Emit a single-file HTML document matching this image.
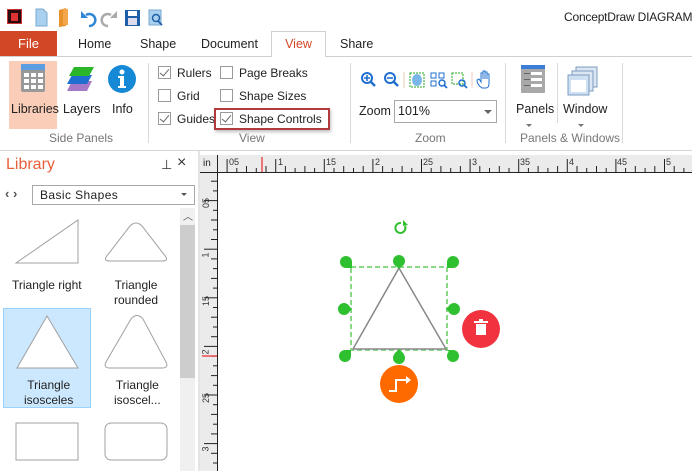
<!DOCTYPE html>
<html><head><meta charset="utf-8"><style>
*{box-sizing:border-box;margin:0;padding:0}
body{width:692px;height:471px;overflow:hidden;background:#fff;font-family:"Liberation Sans",sans-serif;font-size:12px;color:#222;position:relative}
.a{position:absolute}
.t{position:absolute;white-space:nowrap}
.cb{position:absolute;width:13px;height:13px;border:1px solid #9a9a9a;background:#fff}
.cb.c::after{content:"";position:absolute;left:3px;top:0px;width:4px;height:8px;border:solid #666;border-width:0 1.5px 1.5px 0;transform:rotate(40deg)}
.sep{position:absolute;width:1px;background:#dadada}
.gl{position:absolute;color:#777;font-size:12px;white-space:nowrap}
</style></head><body>
<!-- title bar -->
<div class="a" style="left:7px;top:9px;width:15px;height:15px;background:#2a0a0a;border:1px solid #c33"></div>
<div class="a" style="left:11px;top:13px;width:7px;height:8px;background:#d33"></div>
<svg class="a" style="left:30px;top:6px" width="150" height="22">
<path d="M6 3h7l4 4v13H6z" fill="#a9d0ee" stroke="#7aa9cf"/>
<path d="M29 4l7-2v18l-7 1z" fill="#e8902a"/><path d="M33 3h5v16h-5z" fill="#f4a64a"/>
<path d="M56 9a6 6 0 1 1 3 11" fill="none" stroke="#2f86d6" stroke-width="2.5"/><path d="M51 5v7h7z" fill="#2f86d6"/>
<path d="M78 20a6 6 0 1 1 3-11" fill="none" stroke="#aaa" stroke-width="2.5"/><path d="M87 5v7h-7z" fill="#aaa"/>
<rect x="95" y="4" width="15" height="16" fill="#1f5fa8"/><rect x="98" y="5" width="9" height="5" fill="#fff"/><rect x="98" y="12" width="9" height="7" fill="#dde"/>
<rect x="119" y="4" width="12" height="15" fill="#a9d0ee" stroke="#7aa9cf"/><circle cx="126" cy="12" r="3.5" fill="none" stroke="#1f5fa8" stroke-width="1.5"/><path d="M128 15l4 4" stroke="#1f5fa8" stroke-width="1.8"/>
</svg>
<div class="t" style="left:564px;top:10px;font-size:12px;letter-spacing:-0.2px;color:#222">ConceptDraw DIAGRAM</div>
<!-- tabs -->
<div class="a" style="left:0;top:31px;width:57px;height:25px;background:#d24726;color:#fff;font-size:13px;text-align:center;line-height:25px">File</div>
<div class="t" style="left:78px;top:37px;font-size:12.5px">Home</div>
<div class="t" style="left:140px;top:37px;font-size:12.5px">Shape</div>
<div class="t" style="left:201px;top:37px;font-size:12.5px">Document</div>
<div class="a" style="left:271px;top:31px;width:55px;height:26px;border:1px solid #d0d0d0;border-bottom:none;background:#fff;color:#d24726;font-size:12.5px;text-align:center;line-height:25px">View</div>
<div class="t" style="left:340px;top:37px;font-size:12.5px">Share</div>
<div class="a" style="left:0;top:56px;width:692px;height:1px;background:#d0d0d0"></div>
<div class="a" style="left:272px;top:56px;width:53px;height:1px;background:#fff"></div>
<!-- ribbon -->
<div class="a" style="left:9px;top:61px;width:48px;height:68px;background:#f9cdb7"></div>
<svg class="a" style="left:20px;top:63px" width="26" height="32"><rect x="1" y="1" width="24" height="28" rx="2" fill="#999"/><rect x="1" y="1" width="24" height="6" fill="#5a9de0"/>
<g fill="#fff"><rect x="4" y="10" width="5" height="4"/><rect x="11" y="10" width="5" height="4"/><rect x="18" y="10" width="5" height="4"/><rect x="4" y="16" width="5" height="4"/><rect x="11" y="16" width="5" height="4"/><rect x="18" y="16" width="5" height="4"/><rect x="4" y="22" width="5" height="4"/><rect x="11" y="22" width="5" height="4"/><rect x="18" y="22" width="5" height="4"/></g></svg>
<svg class="a" style="left:63px;top:64px" width="32" height="30"><path d="M5 18l20 0-5 10h-20z" fill="#a678c8" transform="translate(4,-1)"/><path d="M9 11h20l-5 9h-20z" fill="#1f6fd0"/><path d="M11 3h20l-5 9h-20z" fill="#2ab52a"/></svg>
<svg class="a" style="left:107px;top:64px" width="30" height="30"><circle cx="15" cy="15" r="14" fill="#1589d6"/><circle cx="15" cy="8" r="2.5" fill="#fff"/><path d="M11 12h6v10h2v2h-8v-2h2v-8h-2z" fill="#fff"/></svg>
<div class="t" style="left:11px;top:102px;font-size:12.5px">Libraries</div>
<div class="t" style="left:63px;top:102px;font-size:12.5px">Layers</div>
<div class="t" style="left:112px;top:102px;font-size:12.5px">Info</div>
<div class="gl" style="left:49px;top:131px">Side Panels</div>
<div class="sep" style="left:148px;top:63px;height:80px"></div>
<div class="cb c" style="left:158px;top:66px"></div><div class="t" style="left:177px;top:66px">Rulers</div>
<div class="cb" style="left:158px;top:89px"></div><div class="t" style="left:177px;top:89px">Grid</div>
<div class="cb c" style="left:158px;top:112px"></div><div class="t" style="left:177px;top:112px">Guides</div>
<div class="cb" style="left:220px;top:66px"></div><div class="t" style="left:239px;top:66px">Page Breaks</div>
<div class="cb" style="left:220px;top:89px"></div><div class="t" style="left:239px;top:89px">Shape Sizes</div>
<div class="a" style="left:214px;top:108px;width:116px;height:22px;border:2px solid #b03a3e;box-shadow:1px 2px 3px rgba(0,0,0,.25)"></div>
<div class="cb c" style="left:220px;top:112px"></div><div class="t" style="left:239px;top:112px">Shape Controls</div>
<div class="gl" style="left:239px;top:131px">View</div>
<div class="sep" style="left:350px;top:63px;height:80px"></div>
<svg class="a" style="left:358px;top:70px" width="142" height="22">
<circle cx="9" cy="8" r="5" fill="none" stroke="#1f6fd0" stroke-width="2"/><path d="M6 8h6M9 5v6" stroke="#1f6fd0" stroke-width="1.6"/><path d="M13 12l4 4" stroke="#1f6fd0" stroke-width="2.5"/>
<circle cx="32" cy="8" r="5" fill="none" stroke="#1f6fd0" stroke-width="2"/><path d="M29 8h6" stroke="#1f6fd0" stroke-width="1.6"/><path d="M36 12l4 4" stroke="#1f6fd0" stroke-width="2.5"/>
<path d="M46 2v16" stroke="#f3c9b8"/>
<rect x="52" y="3" width="14" height="14" fill="none" stroke="#2a2" stroke-dasharray="2 1"/><ellipse cx="59" cy="10" rx="5" ry="6" fill="#7ab6e8"/>
<rect x="73" y="3" width="5" height="5" fill="none" stroke="#1f6fd0"/><rect x="81" y="3" width="5" height="5" fill="none" stroke="#1f6fd0"/><rect x="73" y="11" width="5" height="5" fill="none" stroke="#1f6fd0"/><circle cx="84" cy="13" r="3" fill="none" stroke="#1f6fd0" stroke-width="1.5"/><path d="M86 15l3 3" stroke="#1f6fd0" stroke-width="1.8"/>
<rect x="94" y="3" width="11" height="11" fill="none" stroke="#2a2" stroke-dasharray="2 1"/><circle cx="104" cy="13" r="3" fill="none" stroke="#1f6fd0" stroke-width="1.5"/><path d="M106 15l3 3" stroke="#1f6fd0" stroke-width="1.8"/>
<path d="M114 2v16" stroke="#f3c9b8"/>
<path d="M124 18c-3-2-5-5-5-8l2-1 2 3v-9h2v6-8h2v8-7h2v7-5h2v9c0 3-1 5-3 5z" fill="none" stroke="#1f6fd0" stroke-width="1"/>
</svg>
<div class="t" style="left:359px;top:104px;font-size:12.5px">Zoom</div>
<div class="a" style="left:394px;top:100px;width:103px;height:23px;border:1px solid #a8a8a8"></div>
<div class="t" style="left:398px;top:104px;font-size:12.5px">101%</div>
<div class="a" style="left:484px;top:110px;border:4px solid transparent;border-top-color:#666"></div>
<div class="gl" style="left:415px;top:131px">Zoom</div>
<div class="sep" style="left:505px;top:63px;height:80px"></div>
<svg class="a" style="left:520px;top:64px" width="26" height="30"><rect x="1" y="1" width="24" height="28" rx="1" fill="#a8a8a8"/><rect x="1" y="1" width="24" height="4" fill="#3a7ed8"/><g fill="#fff"><rect x="11" y="8" width="11" height="3"/><rect x="11" y="14" width="11" height="3"/><rect x="11" y="20" width="11" height="3"/></g><g fill="#666"><rect x="4" y="9" width="6" height="1"/><rect x="4" y="15" width="6" height="1"/><rect x="4" y="21" width="6" height="1"/></g></svg>
<div class="t" style="left:516px;top:102px;font-size:12.5px">Panels</div>
<div class="a" style="left:526px;top:124px;border:3px solid transparent;border-top-color:#777"></div>
<div class="sep" style="left:557px;top:63px;height:60px"></div>
<svg class="a" style="left:567px;top:66px" width="32" height="30"><rect x="9" y="1" width="21" height="20" fill="#dbe6f2" stroke="#7a9cc0"/><rect x="5" y="5" width="21" height="20" fill="#dbe6f2" stroke="#7a9cc0"/><rect x="1" y="9" width="21" height="20" fill="#cfe0f2" stroke="#7a9cc0"/><rect x="4" y="14" width="15" height="12" fill="#fff"/></svg>
<div class="t" style="left:563px;top:102px;font-size:12.5px">Window</div>
<div class="a" style="left:578px;top:124px;border:3px solid transparent;border-top-color:#777"></div>
<div class="gl" style="left:520px;top:131px">Panels &amp; Windows</div>
<div class="sep" style="left:622px;top:63px;height:80px"></div>
<div class="a" style="left:0;top:150px;width:692px;height:1px;background:#d6d6d6"></div>
<!-- library -->
<div class="t" style="left:6px;top:156px;font-size:16px;color:#e8603a">Library</div>
<div class="t" style="left:161px;top:157px;font-size:13px;color:#333">⊥</div>
<div class="t" style="left:177px;top:154px;font-size:16px;color:#333">×</div>
<div class="t" style="left:5px;top:186px;font-size:13px;color:#555;font-weight:bold">‹ ›</div>
<div class="a" style="left:32px;top:185px;width:163px;height:20px;border:1px solid #a8a8a8"></div>
<div class="t" style="left:40px;top:188px;font-size:12px;letter-spacing:.4px">Basic Shapes</div>
<div class="a" style="left:181px;top:193px;border:3.5px solid transparent;border-top-color:#555"></div>
<div class="a" style="left:180px;top:208px;width:15px;height:263px;background:#f0f0f0"></div>
<div class="a" style="left:180px;top:225px;width:15px;height:153px;background:#cdcdcd"></div>
<div class="t" style="left:183px;top:208px;font-size:10px;color:#555">︿</div>
<div class="a" style="left:198px;top:151px;width:2px;height:320px;background:#e4e4e4"></div>
<div class="a" style="left:3px;top:308px;width:88px;height:100px;background:#cce8ff;border:1px solid #99d1ff"></div>
<svg class="a" style="left:0;top:0" width="180" height="471" fill="#fff" stroke="#a0a0a0">
<path d="M16 263L78 220V263z"/>
<path d="M106 257L130 226q6-6 12 0L166 257q2 4-4 4H110q-6 0-4-4z"/>
<path d="M17 368L47 316L78 368z"/>
<path d="M106 362L131 319q6-7 12 0L166 362q3 6-4 6H110q-7 0-4-6z"/>
<rect x="16" y="423" width="62" height="37"/>
<rect x="105" y="423" width="62" height="37" rx="6"/>
</svg>
<div class="t" style="left:12px;top:278px">Triangle right</div>
<div class="t" style="left:114px;top:278px;text-align:center;line-height:15px">Triangle<br>rounded</div>
<div class="t" style="left:24px;top:378px;text-align:center;line-height:15px">Triangle<br>isosceles</div>
<div class="t" style="left:114px;top:378px;text-align:center;line-height:15px">Triangle<br>isoscel...</div>
<!-- rulers -->
<div class="a" style="left:200px;top:155px;width:492px;height:18px;background:#ebebeb"></div>
<div class="a" style="left:200px;top:155px;width:18px;height:316px;background:#ebebeb"></div>
<div class="t" style="left:203px;top:158px;font-size:10px">in</div>
<svg class="a" style="left:0;top:0" width="692" height="471" id="r"></svg>
<div id="lab" style="font-size:9px;color:#333">
<div class="t" style="left:229px;top:157px">05</div><div class="t" style="left:278px;top:157px">1</div><div class="t" style="left:326px;top:157px">15</div><div class="t" style="left:375px;top:157px">2</div><div class="t" style="left:423px;top:157px">25</div><div class="t" style="left:472px;top:157px">3</div><div class="t" style="left:520px;top:157px">35</div><div class="t" style="left:569px;top:157px">4</div><div class="t" style="left:617px;top:157px">45</div><div class="t" style="left:666px;top:157px">5</div>
<div class="t" style="left:201px;top:198px;transform:rotate(-90deg)">05</div><div class="t" style="left:203px;top:250px;transform:rotate(-90deg)">1</div><div class="t" style="left:201px;top:296px;transform:rotate(-90deg)">15</div><div class="t" style="left:203px;top:347px;transform:rotate(-90deg)">2</div><div class="t" style="left:201px;top:393px;transform:rotate(-90deg)">25</div><div class="t" style="left:203px;top:444px;transform:rotate(-90deg)">3</div>
</div>
<!-- shape -->
<svg class="a" style="left:330px;top:200px" width="200" height="210">
<path d="M71 23a5 5 0 1 0 4 3" fill="none" stroke="#2fc02f" stroke-width="2"/><path d="M73 20l5 5-5 1z" fill="#2fc02f"/>
<rect x="21" y="67" width="96" height="83" fill="none" stroke="#88d888" stroke-width="2" stroke-dasharray="5 3"/>
<path d="M69 68L23 149H116z" fill="#fff" stroke="#888" stroke-width="1.5"/>
<g fill="#2fc02f">
<circle cx="16" cy="62" r="6"/><path d="M22 62v6h-6z"/>
<circle cx="69" cy="61" r="6"/><path d="M64 64l5 5 5-5z"/>
<circle cx="123" cy="62" r="6"/><path d="M117 62v6h6z"/>
<circle cx="14" cy="109" r="6"/><path d="M17 104l5 5-5 5z"/>
<circle cx="124" cy="109" r="6"/><path d="M121 104l-5 5 5 5z"/>
<circle cx="15" cy="156" r="6"/><path d="M15 150h6v6z"/>
<circle cx="69" cy="158" r="6"/><path d="M64 154l5-5 5 5z"/>
<circle cx="123" cy="156" r="6"/><path d="M117 150h6v6z"/>
</g>
<circle cx="151" cy="129" r="19" fill="#f0333f"/><rect x="146" y="124" width="10" height="11" fill="#fff"/><rect x="144" y="121" width="14" height="2" fill="#fff"/><rect x="149" y="119" width="4" height="2" fill="#fff"/>
<circle cx="69" cy="184" r="19" fill="#ff6a00"/><path d="M59 191h7v-11h10" fill="none" stroke="#fff" stroke-width="2"/><path d="M76 176l5 4-5 4z" fill="#fff"/>
</svg>
<script>
var s=document.getElementById('r'),h='';
for(var i=0;i<60;i++){var x=178.5+i*9.72;if(x<219)continue;var L=i%5==0?13:((i%2==0)?4:6);h+='<line x1="'+x.toFixed(1)+'" x2="'+x.toFixed(1)+'" y1="'+(172-L)+'" y2="172" stroke="#222"/>';}
for(var i=0;i<35;i++){var y=152+i*9.72;if(y<174)continue;var L=i%5==0?13:((i%2==0)?4:6);h+='<line y1="'+y.toFixed(1)+'" y2="'+y.toFixed(1)+'" x1="'+(217-L)+'" x2="217" stroke="#222"/>';}
h+='<line x1="200" x2="692" y1="172.5" y2="172.5" stroke="#222"/><line x1="217.5" x2="217.5" y1="155" y2="471" stroke="#222"/>';
h+='<line x1="262" x2="262" y1="157" y2="172" stroke="#e00"/><line x1="202" x2="217" y1="356" y2="356" stroke="#e00"/>';
s.innerHTML=h;
</script>
</body></html>
